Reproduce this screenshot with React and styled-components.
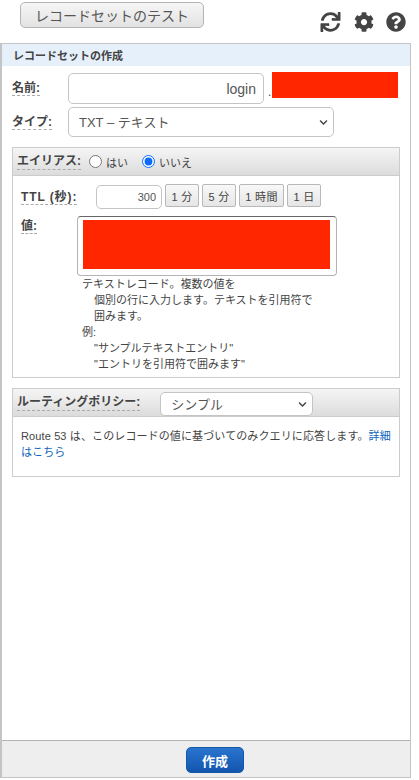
import React from "react";
import styled, { createGlobalStyle } from "styled-components";
import { FaSync, FaCog, FaQuestionCircle, FaChevronDown } from "react-icons/fa";

const GlobalStyle = createGlobalStyle`
  html, body {
    margin: 0;
    padding: 0;
    background: #fff;
  }
  body {
    font-family: "Liberation Sans", "Noto Sans CJK JP", sans-serif;
    font-size: 11px;
    color: #444;
  }
  * {
    box-sizing: border-box;
  }
`;

const Page = styled.div`
  width: 411px;
  height: 778px;
  display: flex;
  flex-direction: column;
`;

const TopBar = styled.div`
  height: 43px;
  flex: none;
  display: flex;
  justify-content: space-between;
  padding: 2px 5px 0 20px;
`;

const TestButton = styled.button`
  width: 184px;
  height: 26px;
  border: 1px solid #b4b4b4;
  border-radius: 5px;
  background: linear-gradient(#f6f6f6, #e2e2e2);
  color: #555;
  font: 14px "Liberation Sans", "Noto Sans CJK JP", sans-serif;
  padding: 0;
`;

const IconGroup = styled.div`
  display: flex;
  gap: 12px;
  padding-top: 10px;
  height: 32px;
  color: #444;
  font-size: 20px;
`;

const RefreshIcon = styled(FaSync)`
  width: 21px;
  height: 20px;
  margin-right: 1px;
`;

const Panel = styled.div`
  flex: 1;
  display: flex;
  flex-direction: column;
  border: 1px solid #c4c4c4;
  border-left-width: 2px;
  border-bottom: 1px solid #c4c4c4;
  min-height: 0;
`;

const PanelTitle = styled.div`
  height: 22px;
  flex: none;
  padding: 0 0 0 11px;
  background: #e6f0fb;
  font-weight: bold;
  font-size: 11px;
  line-height: 24px;
  color: #444;
`;

const PanelBody = styled.div`
  flex: 1;
  padding: 7px 10px 0 10px;
`;

const FormRow = styled.div`
  display: flex;
  align-items: ${(p) => p.$align || "center"};
  gap: ${(p) => p.$gap || 0}px;
  height: ${(p) => p.$height}px;
  margin-bottom: ${(p) => p.$mb || 0}px;
`;

const Label = styled.span`
  font-weight: bold;
  font-size: 12px;
  line-height: 15px;
  color: #444;
  border-bottom: 1px dashed #aaa;
  flex: none;
  letter-spacing: ${(p) => p.$spacing || 0}px;
`;

const LabelCell = styled.div`
  width: ${(p) => p.$width}px;
  flex: none;
  padding-top: ${(p) => p.$top || 0}px;
`;

const TextInput = styled.input`
  width: ${(p) => p.$width}px;
  height: ${(p) => p.$height}px;
  border: 1px solid #c4c4c4;
  border-radius: 5px;
  background: #fff;
  text-align: right;
  color: #555;
  font: ${(p) => p.$size}px "Liberation Sans", sans-serif;
  padding: 0 ${(p) => p.$pad}px 0 0;
  outline: none;
  flex: none;
`;

const Dot = styled.span`
  width: 8px;
  padding-left: 4px;
  flex: none;
  font-size: 12px;
  line-height: 12px;
  align-self: flex-end;
  margin-bottom: 6px;
`;

const Redacted = styled.div`
  background: #ff2600;
  flex: none;
  width: ${(p) => p.$width}px;
  height: ${(p) => p.$height}px;
`;

const NameRedacted = styled(Redacted)`
  align-self: flex-start;
  margin-top: -1px;
`;

const SelectWrap = styled.div`
  position: relative;
  flex: none;
  width: ${(p) => p.$width}px;
  height: ${(p) => p.$height}px;
`;

const PolicySelectWrap = styled(SelectWrap)`
  align-self: flex-end;
`;

const Select = styled.select`
  appearance: none;
  width: 100%;
  height: 100%;
  border: 1px solid #c4c4c4;
  border-radius: 5px;
  background: #fff;
  color: #555;
  font: 13px "Liberation Sans", "Noto Sans CJK JP", sans-serif;
  padding: 0 0 0 10px;
  outline: none;
`;

const Chevron = styled(FaChevronDown)`
  position: absolute;
  right: 6px;
  top: 50%;
  margin-top: -4px;
  width: 9px;
  height: 9px;
  color: #444;
  pointer-events: none;
`;

const Box = styled.div`
  border: 1px solid #ccc;
  margin: 0 0 10px 0;
  height: ${(p) => p.$height}px;
  width: 388px;
`;

const BoxHeader = styled.div`
  height: 28px;
  display: flex;
  align-items: center;
  padding-left: 4px;
  background: linear-gradient(#f5f5f5, #dcdcdc);
  border-bottom: 1px solid #ccc;
`;

const RadioLabel = styled.label`
  display: flex;
  align-items: center;
  font-size: 11px;
  color: #444;
  margin-left: ${(p) => p.$left}px;
`;

const Radio = styled.input`
  margin: 0 4px 0 0;
  width: 13px;
  height: 13px;
  accent-color: #0a6cff;
`;

const AliasBody = styled.div`
  padding: 9px 0 0 8px;
`;

const ChipRow = styled.div`
  display: flex;
  gap: 3px;
  margin: -1px 0 0 3px;
  align-self: flex-start;
`;

const Chip = styled.button`
  height: 23px;
  width: ${(p) => p.$width}px;
  padding: 0;
  border: 1px solid #b8b8b8;
  border-radius: 2px;
  background: linear-gradient(#f8f8f8, #e6e6e6);
  color: #444;
  font: 11px "Liberation Sans", "Noto Sans CJK JP", sans-serif;
  letter-spacing: 0.3px;
`;

const ValueArea = styled.div`
  width: 260px;
  height: 60px;
  flex: none;
  padding: 3px 0 0 5px;
  border: 1px solid #b4b4b4;
  border-top-color: #666;
  border-radius: 4px;
`;

const HelpText = styled.div`
  margin: 0 0 0 61px;
  font-size: 11px;
  line-height: 16px;
  color: #444;
`;

const HelpIndent = styled.div`
  padding-left: 12px;
`;

const PolicyLabel = styled.div`
  margin-right: 20px;
  display: flex;
`;

const PolicyBody = styled.div`
  padding: 12px 8px 0 8px;
  font-size: 11px;
  line-height: 15.5px;
  letter-spacing: 0.12px;
  color: #444;
`;

const DocLink = styled.a`
  color: #1166bb;
  text-decoration: none;
`;

const Footer = styled.div`
  height: 37px;
  flex: none;
  display: flex;
  justify-content: center;
  align-items: flex-start;
  padding: 6px 0 0 18px;
  background: #eeeeee;
  border-top: 1px solid #b4b4b4;
`;

const CreateButton = styled.button`
  width: 58px;
  height: 26px;
  padding: 0;
  border: 1px solid #1558a8;
  border-radius: 5px;
  background: linear-gradient(#2a74cf, #1256ae);
  color: #fff;
  font: bold 13px "Liberation Sans", "Noto Sans CJK JP", sans-serif;
`;

export default function App() {
  return (
    <Page>
      <GlobalStyle />
      <TopBar>
        <TestButton>レコードセットのテスト</TestButton>
        <IconGroup>
          <RefreshIcon />
          <FaCog />
          <FaQuestionCircle />
        </IconGroup>
      </TopBar>
      <Panel>
        <PanelTitle>レコードセットの作成</PanelTitle>
        <PanelBody>
          <FormRow $height={31} $mb={3}>
            <LabelCell $width={56}>
              <Label>名前:</Label>
            </LabelCell>
            <TextInput $width={196} $height={31} $size={14} $pad={7} defaultValue="login" />
            <Dot>.</Dot>
            <NameRedacted $width={126} $height={26} />
          </FormRow>
          <FormRow $height={30} $mb={10}>
            <LabelCell $width={56}>
              <Label>タイプ:</Label>
            </LabelCell>
            <SelectWrap $width={266} $height={30}>
              <Select defaultValue="txt">
                <option value="txt">TXT – テキスト</option>
              </Select>
              <Chevron />
            </SelectWrap>
          </FormRow>
          <Box $height={231}>
            <BoxHeader>
              <Label>エイリアス:</Label>
              <RadioLabel $left={8}>
                <Radio type="radio" name="alias" />
                はい
              </RadioLabel>
              <RadioLabel $left={14}>
                <Radio type="radio" name="alias" defaultChecked />
                いいえ
              </RadioLabel>
            </BoxHeader>
            <AliasBody>
              <FormRow $height={24} $mb={7}>
                <LabelCell $width={75}>
                  <Label $spacing={0.9}>TTL (秒):</Label>
                </LabelCell>
                <TextInput $width={66} $height={24} $size={11} $pad={5} defaultValue="300" />
                <ChipRow>
                  <Chip $width={34}>1 分</Chip>
                  <Chip $width={34}>5 分</Chip>
                  <Chip $width={45}>1 時間</Chip>
                  <Chip $width={34}>1 日</Chip>
                </ChipRow>
              </FormRow>
              <FormRow $height={60} $align="flex-start">
                <LabelCell $width={56} $top={3}>
                  <Label>値:</Label>
                </LabelCell>
                <ValueArea>
                  <Redacted $width={247} $height={49} />
                </ValueArea>
              </FormRow>
              <HelpText>
                テキストレコード。複数の値を
                <HelpIndent>個別の行に入力します。テキストを引用符で</HelpIndent>
                <HelpIndent>囲みます。</HelpIndent>
                例:
                <HelpIndent>"サンプルテキストエントリ"</HelpIndent>
                <HelpIndent>"エントリを引用符で囲みます"</HelpIndent>
              </HelpText>
            </AliasBody>
          </Box>
          <Box $height={89}>
            <BoxHeader>
              <PolicyLabel>
                <Label>ルーティングポリシー:</Label>
              </PolicyLabel>
              <PolicySelectWrap $width={153} $height={24}>
                <Select defaultValue="simple">
                  <option value="simple">シンプル</option>
                </Select>
                <Chevron />
              </PolicySelectWrap>
            </BoxHeader>
            <PolicyBody>
              Route 53 は、このレコードの値に基づいてのみクエリに応答します。<DocLink href="#">詳細はこちら</DocLink>
            </PolicyBody>
          </Box>
        </PanelBody>
        <Footer>
          <CreateButton>作成</CreateButton>
        </Footer>
      </Panel>
    </Page>
  );
}
